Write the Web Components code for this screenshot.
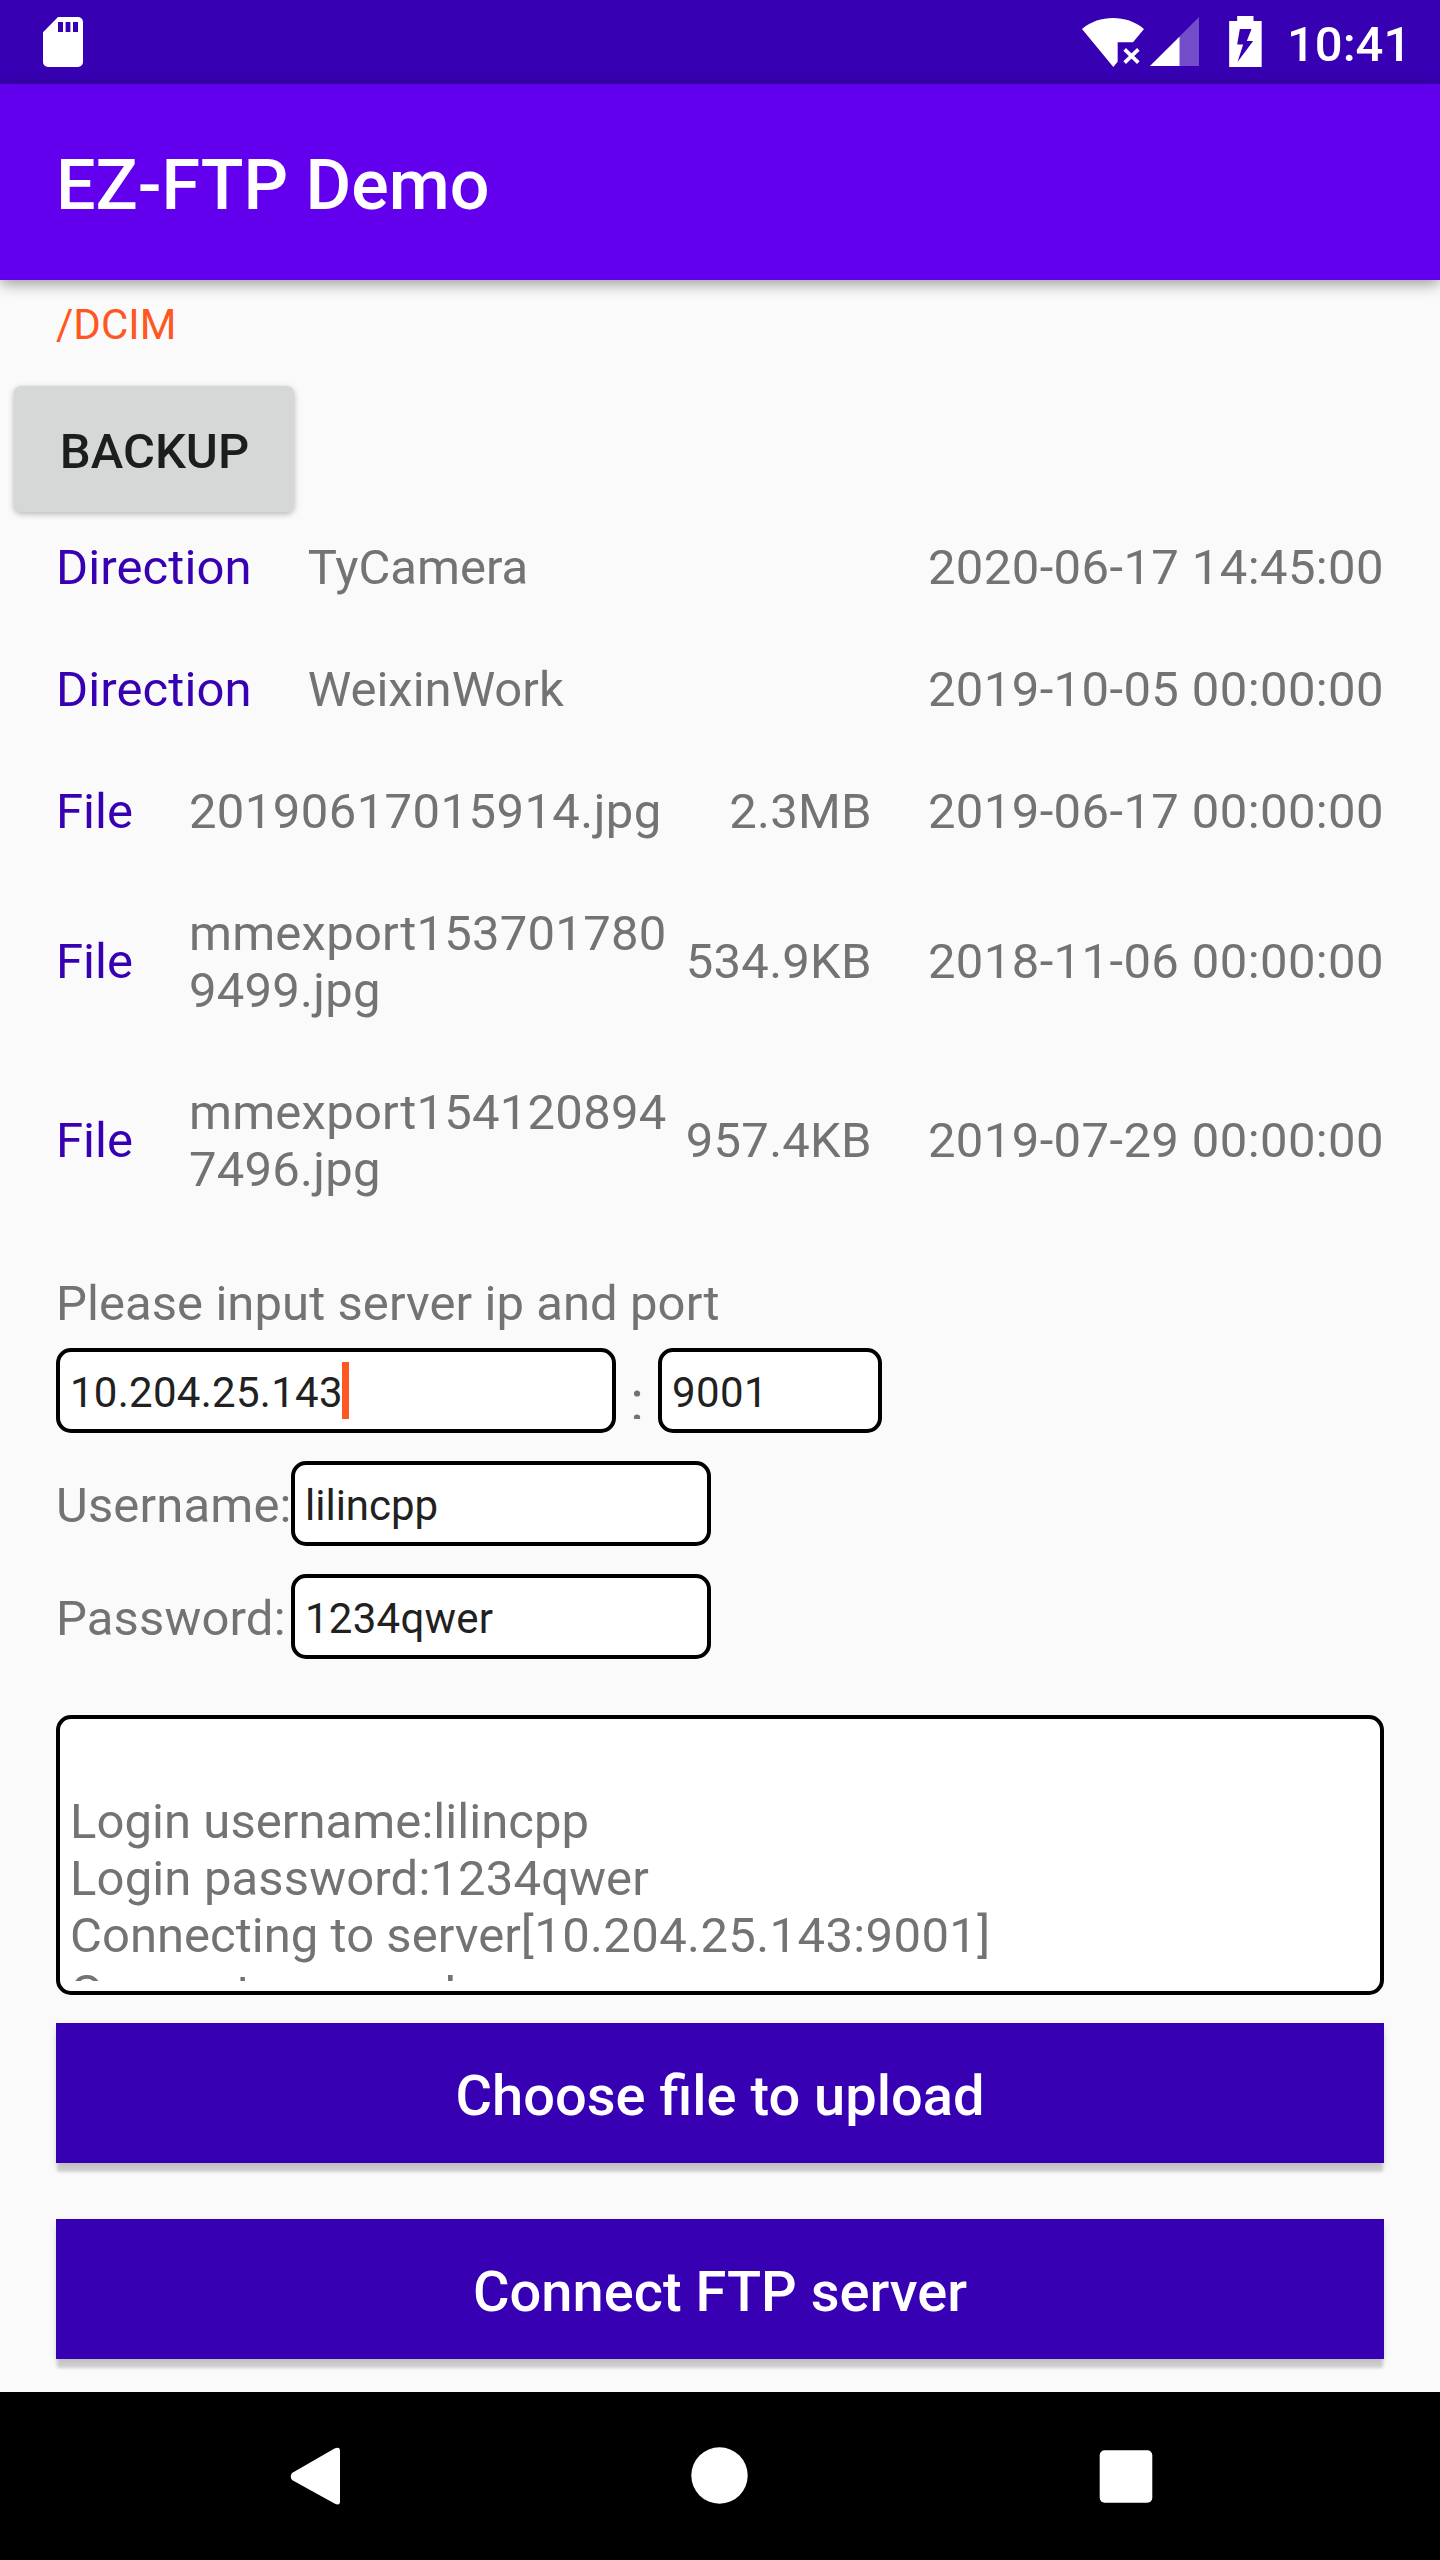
<!DOCTYPE html>
<html lang="en">
<head>
<meta charset="utf-8">
<title>EZ-FTP Demo</title>
<style>
  html, body { margin: 0; background: #fafafa; }
  body { width: 1440px; height: 2560px; overflow: hidden; font-family: Roboto, sans-serif; }
</style>
</head>
<body>
<ftp-app></ftp-app>
<script>
function define(name, html) {
  const template = document.createElement('template');
  template.innerHTML = html;
  customElements.define(name, class extends HTMLElement {
    constructor() {
      super();
      this.attachShadow({ mode: 'open' }).append(template.content.cloneNode(true));
    }
  });
}

define('status-bar', `
<style>
  :host { display: flex; align-items: flex-start; height: 84px; box-sizing: border-box; background: #3700b3; color: #fff; padding-left: 43px; padding-right: 36px; }
  svg { display: block; flex: none; }
  .space { flex: 1; }
  .signal { margin-left: 6px; }
  .battery { margin-left: 30px; }
  time { font-size: 49px; font-weight: 500; line-height: 57px; margin: 16px 0 0 25px; width: 117px; white-space: nowrap; }
</style>
<svg width="40" height="84" viewBox="0 0 40 84"><path fill="#fff" fill-rule="evenodd" d="M15 17H35a5 5 0 0 1 5 5V62a5 5 0 0 1-5 5H5a5 5 0 0 1-5-5V32.300ZM15 22V32H20V22ZM22.600 22V32H27.400V22ZM30 22V32H35V22Z"/></svg>
<span class="space"></span>
<svg width="62" height="84" viewBox="66 0 186 252"><path fill="#fff" d="M66 87C93 64 126 54 159 54S225 64 252 87L219 127H173V185L160 201Z"/><path d="M194 148L235 188M235 148L194 188" stroke="#fff" stroke-width="11"/></svg>
<svg class="signal" width="49" height="84" viewBox="270 0 147 252"><path fill="#fff" fill-opacity=".3" d="M270 198H417V51Z"/><path fill="#fff" d="M270 198H358.500V110Z"/></svg>
<svg class="battery" width="33" height="84" viewBox="507.500 0 99 252"><path fill="#fff" fill-rule="evenodd" d="M532 48H581V63H605.500V201H508V63H532ZM540 87L532 133.500H550L533 186L580 123H561L575 87Z"/></svg>
<time>10:41</time>`);

define('app-bar', `
<style>
  :host { display: flex; align-items: center; height: 196px; box-sizing: border-box; padding-left: 56px; padding-top: 6px; background: #6200ee; color: #fff; font-size: 70px; font-weight: 500; box-shadow: 0 4px 14px rgba(0,0,0,.38); }
</style>
<slot></slot>`);

define('plain-button', `
<style>
  :host { display: flex; align-items: center; justify-content: center; width: 280px; height: 126px; box-sizing: border-box; padding: 4px 0 0 1px; border-radius: 7px; background: #d6d7d7; color: #1c1d1d; font-size: 49px; font-weight: 500; box-shadow: 0 2px 6px rgba(0,0,0,.28); }
</style>
<slot></slot>`);

define('file-row', `
<style>
  :host { display: flex; align-items: center; padding-bottom: 65px; font-size: 49px; line-height: 57px; color: #737373; white-space: nowrap; }
  .kind, .size, .date { margin-bottom: var(--cell-drop, 0px); }
  .kind { color: #3700b3; margin-right: 56px; letter-spacing: var(--kind-spacing, 0px); }
  .name { flex: 1; min-width: 0; white-space: normal; word-break: break-all; letter-spacing: var(--name-spacing, 0px); }
  .size { margin-left: 14px; letter-spacing: .25px; }
  .date { margin-left: 56px; letter-spacing: .4px; }
</style>
<span class="kind"><slot name="kind"></slot></span>
<span class="name"><slot></slot></span>
<span class="size"><slot name="size"></slot></span>
<span class="date"><slot name="date"></slot></span>`);

define('text-field', `
<style>
  :host { display: flex; align-items: center; flex: none; height: 85px; width: 420px; box-sizing: border-box; border: 4px solid #000; border-radius: 15px; padding: 4px 10px 0; background: #fff; color: #212121; font-size: 42px; line-height: 49px; white-space: nowrap; }
  i { display: none; width: 7px; height: 57px; background: #ff5722; margin: -4px 0 0 -1px; }
  :host([focused]) i { display: block; }
</style>
<slot></slot><i></i>`);

define('field-row', `
<style>
  :host { display: flex; align-items: flex-start; height: 84px; font-size: 49px; line-height: 57px; color: #737373; }
  .label { width: var(--label-width, 235px); padding-top: 16px; white-space: nowrap; letter-spacing: .15px; }
</style>
<span class="label"><slot name="label"></slot></span><slot></slot>`);

define('colon-mark', `
<style>
  :host { display: block; width: 42px; height: 57px; margin-top: 14px; overflow: hidden; text-align: center; font-size: 56px; line-height: 66px; }
  span { display: block; padding-top: 6px; }
</style>
<span><slot></slot></span>`);

define('log-box', `
<style>
  :host { display: block; height: 280px; box-sizing: border-box; border: 4px solid #000; border-radius: 15px; padding: 10px; background: #fff; color: #737373; font-size: 49px; line-height: 57px; }
  .view { height: 252px; overflow: hidden; white-space: pre; }
  .lines { padding-top: 64px; }
</style>
<div class="view"><div class="lines"><slot></slot></div></div>`);

define('action-button', `
<style>
  :host { display: flex; align-items: center; justify-content: center; height: 140px; box-sizing: border-box; padding-top: 6px; background: #3700b3; color: #fff; font-size: 56px; font-weight: 500; box-shadow: 0 10px 3px -1px rgba(0,0,0,.16), 0 3px 8px rgba(0,0,0,.11); }
</style>
<slot></slot>`);

define('nav-bar', `
<style>
  :host { display: flex; align-items: center; justify-content: space-between; height: 168px; box-sizing: border-box; padding: 0 287px; background: #000; }
  svg { display: block; overflow: visible; }
</style>
<svg width="56" height="60" viewBox="0 0 56 60"><path fill="#fff" d="M5 27L47.500 2.500Q53 0 53 5V55.500Q53 60 47.500 57.500L5 34Q2.500 30.500 5 27Z"/></svg>
<svg width="58" height="60" viewBox="0 0 58 60"><circle cx="27.500" cy="29.500" r="28.200" fill="#fff"/></svg>
<svg width="54" height="60" viewBox="0 0 54 60"><rect x=".7" y="4.200" width="52.600" height="52.600" rx="5" fill="#fff"/></svg>`);

define('ftp-app', `
<style>
  :host { display: flex; flex-direction: column; width: 1440px; height: 2560px; background: #fafafa; font-family: Roboto, sans-serif; color: #737373; }
  main { flex: 1; display: flex; flex-direction: column; padding: 20px 56px 0; }
  .path { color: #ff5722; font-size: 42px; line-height: 49px; }
  plain-button { margin: 37px 0 27px -42px; }
  .folder { --kind-spacing: .1px; }
  .digits { --name-spacing: .42px; }
  .mixed { --name-spacing: .25px; --cell-drop: 1px; }
  .hint { font-size: 49px; line-height: 57px; margin: 12px 0 16px; letter-spacing: .07px; }
  .fields { display: flex; flex-direction: column; gap: 29px; }
  .server { --label-width: 0px; }
  .ip { width: 560px; letter-spacing: .27px; }
  .port { width: 224px; letter-spacing: .4px; }
  .pass { letter-spacing: .25px; }
  log-box { margin: 57px 0 28px; }
  .l1 { letter-spacing: .06px; }
  .l2 { letter-spacing: .15px; }
  .l3 { letter-spacing: .03px; }
  .l3 b { font-weight: 400; letter-spacing: .38px; }
  .actions { display: flex; flex-direction: column; gap: 56px; }
</style>
<status-bar></status-bar>
<app-bar>EZ-FTP Demo</app-bar>
<main>
  <div class="path">/DCIM</div>
  <plain-button>BACKUP</plain-button>
  <div class="files">
    <file-row class="folder"><span slot="kind">Direction</span>TyCamera<span slot="date">2020-06-17 14:45:00</span></file-row>
    <file-row class="folder"><span slot="kind">Direction</span>WeixinWork<span slot="date">2019-10-05 00:00:00</span></file-row>
    <file-row class="digits"><span slot="kind">File</span>20190617015914.jpg<span slot="size">2.3MB</span><span slot="date">2019-06-17 00:00:00</span></file-row>
    <file-row class="mixed"><span slot="kind">File</span>mmexport1537017809499.jpg<span slot="size">534.9KB</span><span slot="date">2018-11-06 00:00:00</span></file-row>
    <file-row class="mixed"><span slot="kind">File</span>mmexport1541208947496.jpg<span slot="size">957.4KB</span><span slot="date">2019-07-29 00:00:00</span></file-row>
  </div>
  <div class="hint">Please input server ip and port</div>
  <div class="fields">
    <field-row class="server"><text-field class="ip" focused>10.204.25.143</text-field><colon-mark>:</colon-mark><text-field class="port">9001</text-field></field-row>
    <field-row><span slot="label">Username:</span><text-field>lilincpp</text-field></field-row>
    <field-row><span slot="label">Password:</span><text-field class="pass">1234qwer</text-field></field-row>
  </div>
  <log-box><span class="l1">Login username:lilincpp</span>
<span class="l2">Login password:1234qwer</span>
<span class="l3">Connecting to server<b>[10.204.25.143:9001]</b></span>
Connect success!</log-box>
  <div class="actions">
    <action-button>Choose file to upload</action-button>
    <action-button>Connect FTP server</action-button>
  </div>
</main>
<nav-bar></nav-bar>`);
</script>
</body>
</html>
